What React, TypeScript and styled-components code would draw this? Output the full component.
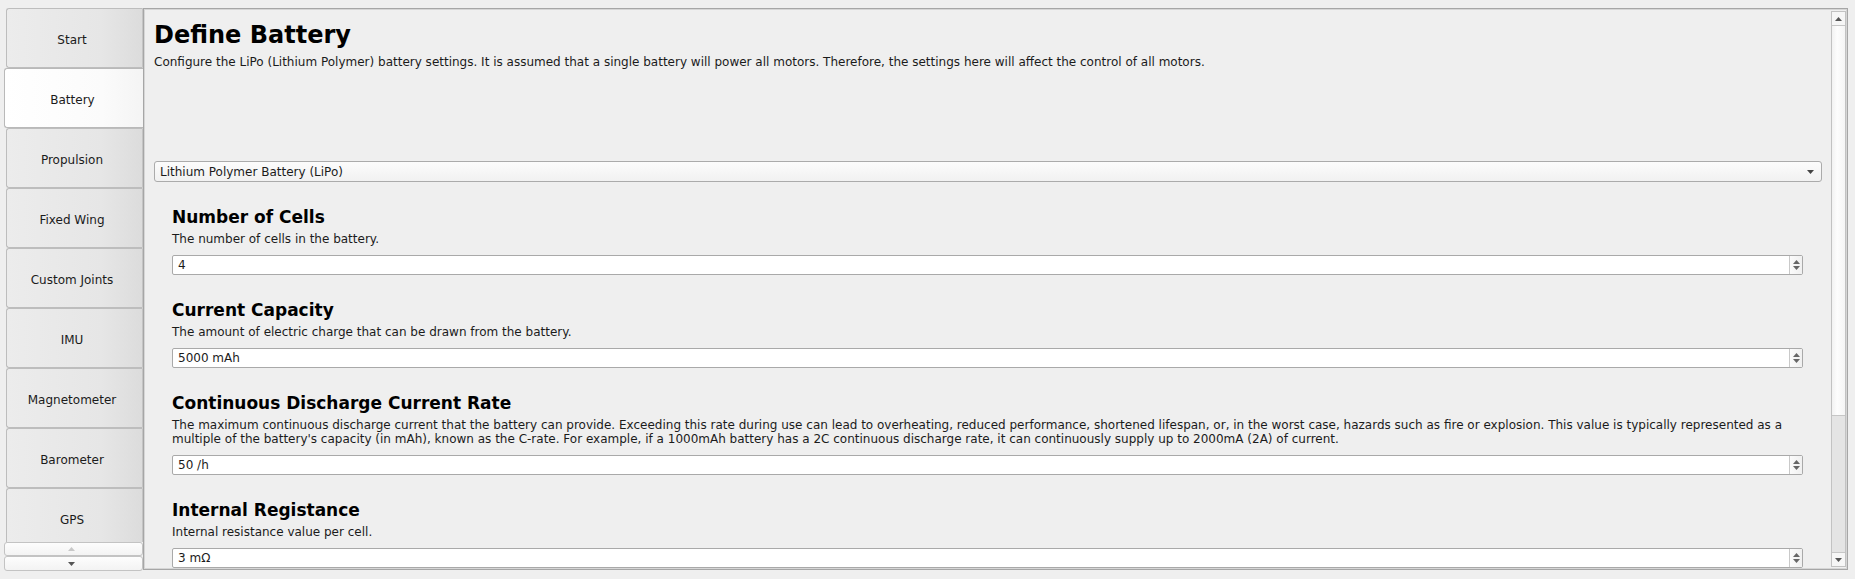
import React from "react";
import styled, { createGlobalStyle } from "styled-components";

const Global = createGlobalStyle`
  html, body { margin: 0; padding: 0; background: #efefef; }
  body { font-family: "DejaVu Sans", "Liberation Sans", sans-serif; color: #1a1a1a; }
  * { box-sizing: border-box; }
`;

const Window = styled.div`
  display: flex;
  padding: 8px 0 0 4px;
  height: 579px;
  overflow: hidden;
`;

const Sidebar = styled.div`
  width: 139px;
  height: 563px;
  display: flex;
  flex-direction: column;
  flex-shrink: 0;
`;

const TabList = styled.div`
  height: 534px;
  overflow: hidden;
  display: flex;
  flex-direction: column;
`;

const Tab = styled.div<{ $active?: boolean }>`
  flex: 0 0 60px;
  margin-left: ${(p) => (p.$active ? "0" : "2px")};
  margin-right: ${(p) => (p.$active ? "-1px" : "0")};
  position: relative;
  z-index: ${(p) => (p.$active ? 1 : 0)};
  border: 1px solid ${(p) => (p.$active ? "#b9b9b9" : "#bdbdbd")};
  border-right: ${(p) => (p.$active ? "none" : "1px solid #c4c4c4")};
  border-radius: 3px 0 0 3px;
  background: ${(p) =>
    p.$active
      ? "linear-gradient(to right, #ffffff 0%, #fbfbfb 70%, #f4f4f4 100%)"
      : "linear-gradient(to right, #ececec 0%, #e6e6e6 70%, #dcdcdc 100%)"};
  display: flex;
  align-items: center;
  justify-content: center;
  padding: 3px ${(p) => (p.$active ? "4px" : "5px")} 0 0;
  font-size: 12px;
  color: #1b1b1b;
`;

const ScrollBtn = styled.div<{ $h: number }>`
  height: ${(p) => p.$h}px;
  border: 1px solid #c3c3c3;
  border-radius: 3px;
  background: linear-gradient(to bottom, #fdfdfd, #f3f3f3);
  display: flex;
  align-items: center;
  justify-content: center;
  padding-right: 4px;
`;

const Panel = styled.div`
  width: 1705px;
  height: 562px;
  border: 1px solid #a6a6a6;
  box-shadow: inset 0 0 0 1px #d6d6d6;
  display: flex;
  overflow: hidden;
  background: #efefef;
`;

const Content = styled.div`
  flex: 1;
  padding: 12px 9px 0 10px;
  overflow: hidden;
`;

const Title = styled.h1`
  margin: 0;
  font-size: 24px;
  line-height: 28px;
  font-weight: bold;
  color: #000;
`;

const Lead = styled.p`
  margin: 6px 0 0 0;
  font-size: 12px;
  line-height: 14px;
  color: #1b1b1b;
`;

const Combo = styled.div`
  margin-top: 92px;
  height: 21px;
  border: 1px solid #ababab;
  border-radius: 3px;
  background: linear-gradient(to bottom, #fcfcfc, #f1f1f1);
  display: flex;
  align-items: center;
  justify-content: space-between;
  padding: 0 7px 0 5px;
  font-size: 12px;
  color: #1b1b1b;
`;

const Sections = styled.div`
  padding: 0 19px 0 18px;
`;

const Section = styled.section`
  margin-top: 25px;
`;

const Heading = styled.h2`
  margin: 0;
  font-size: 17px;
  line-height: 20px;
  font-weight: bold;
  color: #000;
`;

const Desc = styled.p`
  margin: 5px 0 0 0;
  font-size: 12px;
  line-height: 14px;
  color: #1b1b1b;
`;

const Spin = styled.div`
  margin-top: 9px;
  height: 20px;
  border: 1px solid #a9a9a9;
  border-radius: 2px;
  background: #fff;
  display: flex;
  font-size: 12px;
  color: #1b1b1b;
`;

const SpinValue = styled.div`
  flex: 1;
  padding-left: 5px;
  display: flex;
  align-items: center;
`;

const SpinArrows = styled.div`
  width: 13px;
  border-left: 1px solid #c9c9c9;
  background: linear-gradient(to right, #fbfbfb, #f0f0f0);
  display: flex;
  flex-direction: column;
  align-items: center;
  justify-content: center;
  gap: 2px;
`;

const ScrollBar = styled.div`
  width: 15px;
  margin: 2px 1px 2px 0;
  border: 1px solid #c2c2c2;
  display: flex;
  flex-direction: column;
  background: #e3e3e3;
  flex-shrink: 0;
`;

const SbButton = styled.div`
  height: 13px;
  background: #f6f6f6;
  display: flex;
  align-items: center;
  justify-content: center;
`;

const SbHandle = styled.div`
  height: 391px;
  border-top: 1px solid #c6c6c6;
  border-bottom: 1px solid #c6c6c6;
  background: linear-gradient(to right, #f2f2f2, #fdfdfd 40%, #f5f5f5);
`;

const SbGroove = styled.div`
  flex: 1;
  background: #e4e4e4;
  border-bottom: 1px solid #c6c6c6;
`;

const Tri = ({ dir, color = "#555", w = 8, h = 5 }: { dir: "up" | "down"; color?: string; w?: number; h?: number }) => (
  <svg width={w} height={h} viewBox={`0 0 ${w} ${h}`} style={{ display: "block" }}>
    <polygon
      points={dir === "up" ? `0,${h} ${w / 2},0 ${w},${h}` : `0,0 ${w},0 ${w / 2},${h}`}
      fill={color}
    />
  </svg>
);

const tabs = ["Start", "Battery", "Propulsion", "Fixed Wing", "Custom Joints", "IMU", "Magnetometer", "Barometer", "GPS"];

const fields = [
  { title: "Number of Cells", desc: "The number of cells in the battery.", value: "4" },
  { title: "Current Capacity", desc: "The amount of electric charge that can be drawn from the battery.", value: "5000 mAh" },
  {
    title: "Continuous Discharge Current Rate",
    desc:
      "The maximum continuous discharge current that the battery can provide. Exceeding this rate during use can lead to overheating, reduced performance, shortened lifespan, or, in the worst case, hazards such as fire or explosion. This value is typically represented as a multiple of the battery's capacity (in mAh), known as the C-rate. For example, if a 1000mAh battery has a 2C continuous discharge rate, it can continuously supply up to 2000mA (2A) of current.",
    value: "50 /h",
  },
  { title: "Internal Registance", desc: "Internal resistance value per cell.", value: "3 mΩ" },
];

export default function App() {
  return (
    <>
      <Global />
      <Window>
        <Sidebar>
          <TabList>
            {tabs.map((t) => (
              <Tab key={t} $active={t === "Battery"}>
                {t}
              </Tab>
            ))}
          </TabList>
          <ScrollBtn $h={14}>
            <Tri dir="up" color="#c8c8c8" w={7} h={4} />
          </ScrollBtn>
          <ScrollBtn $h={15}>
            <Tri dir="down" color="#555" w={7} h={4} />
          </ScrollBtn>
        </Sidebar>
        <Panel>
          <Content>
            <Title>Define Battery</Title>
            <Lead>
              Configure the LiPo (Lithium Polymer) battery settings. It is assumed that a single battery will power all
              motors. Therefore, the settings here will affect the control of all motors.
            </Lead>
            <Combo>
              <span>Lithium Polymer Battery (LiPo)</span>
              <Tri dir="down" color="#444" w={7} h={4} />
            </Combo>
            <Sections>
              {fields.map((f) => (
                <Section key={f.title}>
                  <Heading>{f.title}</Heading>
                  <Desc>{f.desc}</Desc>
                  <Spin>
                    <SpinValue>{f.value}</SpinValue>
                    <SpinArrows>
                      <Tri dir="up" color="#666" w={7} h={4} />
                      <Tri dir="down" color="#666" w={7} h={4} />
                    </SpinArrows>
                  </Spin>
                </Section>
              ))}
            </Sections>
          </Content>
          <ScrollBar>
            <SbButton>
              <Tri dir="up" color="#555" w={7} h={4} />
            </SbButton>
            <SbHandle />
            <SbGroove />
            <SbButton>
              <Tri dir="down" color="#555" w={7} h={4} />
            </SbButton>
          </ScrollBar>
        </Panel>
      </Window>
    </>
  );
}
